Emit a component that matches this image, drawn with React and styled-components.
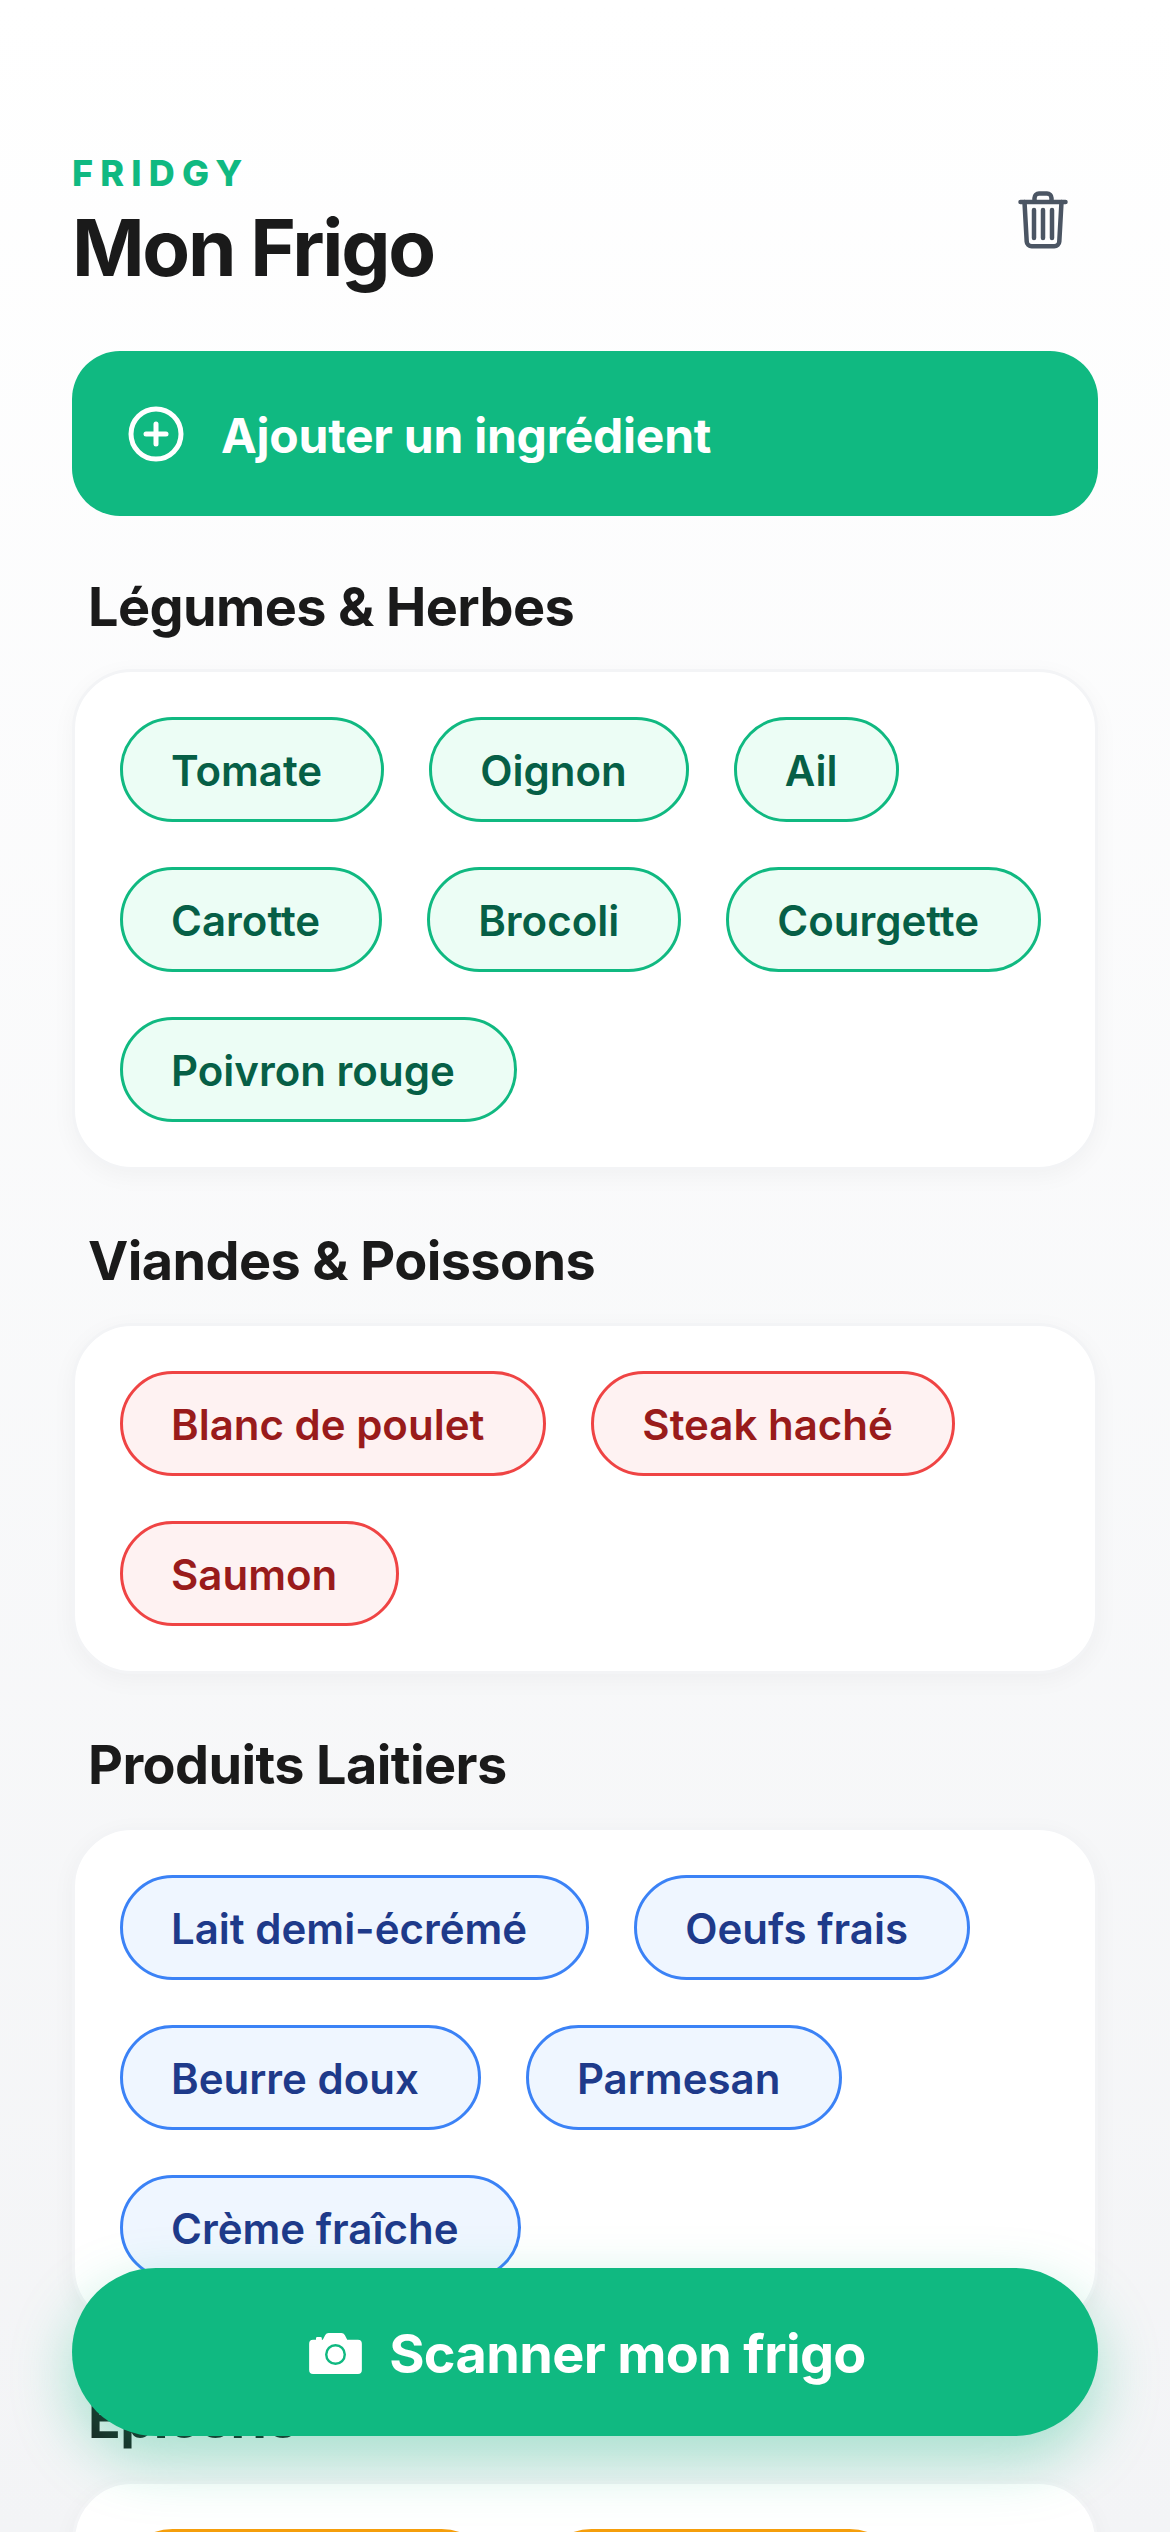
import React from "react";
import styled, { createGlobalStyle } from "styled-components";
import { CirclePlus } from "lucide-react";

const GlobalStyle = createGlobalStyle`
  html, body {
    margin: 0;
    padding: 0;
    background: #fff;
  }
  * {
    box-sizing: border-box;
  }
`;

const tones = {
  green: { bg: "#ecfdf5", border: "#10b981", text: "#065f46" },
  red: { bg: "#fef2f2", border: "#ef4444", text: "#991b1b" },
  blue: { bg: "#eff6ff", border: "#3b82f6", text: "#1e3a8a" },
  orange: { bg: "#fffbeb", border: "#f59e0b", text: "#92400e" }
};

const Screen = styled.div`
  position: relative;
  width: 1170px;
  height: 2532px;
  overflow: hidden;
  padding: 151px 72px 0;
  background: linear-gradient(180deg, #ffffff 0%, #f3f4f6 100%);
  font-family: Inter, "Liberation Sans", sans-serif;
  color: #1a1a1a;
`;

const Header = styled.header`
  display: flex;
  justify-content: space-between;
  align-items: center;
  margin-bottom: 56px;
`;

const Brand = styled.div`
  font-size: 36px;
  line-height: 44px;
  font-weight: 800;
  letter-spacing: 7.2px;
  color: #10b981;
  margin-bottom: 6px;
`;

const Title = styled.h1`
  margin: 0;
  font-size: 78px;
  line-height: 94px;
  font-weight: 700;
  letter-spacing: -2.3px;
`;

const TrashButton = styled.button`
  display: flex;
  padding: 0;
  border: 0;
  background: none;
  margin-right: 30px;
  margin-bottom: 6px;
`;

const AddButton = styled.button`
  display: flex;
  align-items: center;
  gap: 35px;
  width: 100%;
  height: 165px;
  padding: 0 54px;
  border: 0;
  border-radius: 48px;
  background: #10b981;
  color: #fff;
  font-family: inherit;
  font-size: 48px;
  font-weight: 700;
  letter-spacing: -0.25px;
`;

const AddLabel = styled.span`
  padding-top: 3px;
`;

const Section = styled.section`
  margin-top: 56px;
`;

const SectionTitle = styled.h2`
  margin: 0 0 28px;
  padding-left: 16px;
  font-size: 54px;
  line-height: 69px;
  font-weight: 700;
  letter-spacing: -0.6px;
`;

const Card = styled.div`
  display: flex;
  flex-wrap: wrap;
  gap: 45px;
  padding: 45px;
  border: 3px solid #f3f4f6;
  border-radius: 60px;
  background: #fff;
  box-shadow: 0 6px 24px rgba(0, 0, 0, 0.04);
`;

const Chip = styled.span`
  padding: 25px 59px 23px 48px;
  border: 3px solid ${(p) => tones[p.$tone].border};
  border-radius: 999px;
  background: ${(p) => tones[p.$tone].bg};
  color: ${(p) => tones[p.$tone].text};
  font-size: 42px;
  line-height: 51px;
  font-weight: 600;
`;

const ScanButton = styled.button`
  position: absolute;
  left: 72px;
  right: 72px;
  bottom: 96px;
  display: flex;
  align-items: center;
  justify-content: center;
  gap: 27px;
  height: 168px;
  padding: 2px 0 0 5px;
  border: 0;
  border-radius: 84px;
  background: #10b981;
  color: #fff;
  font-family: inherit;
  font-size: 54px;
  font-weight: 700;
  letter-spacing: -0.65px;
  box-shadow: 0 24px 60px rgba(16, 185, 129, 0.35);
`;

const TrashIcon = () => (
  <svg width="50" height="58" viewBox="0 0 50 58" fill="none" stroke="#4b5563" strokeWidth="4.5" strokeLinecap="round" strokeLinejoin="round">
    <path d="M2.5 11h45" />
    <path d="M16.5 10V7a4.5 4.5 0 0 1 4.5-4.5h8A4.5 4.5 0 0 1 33.5 7v3" />
    <path d="M6.5 11l2.2 39.5a5 5 0 0 0 5 4.7h22.6a5 5 0 0 0 5-4.7L43.500 11" />
    <path d="M16 19v28M25 19v28M34 19v28" />
  </svg>
);

const CameraIcon = () => (
  <svg width="53" height="41" viewBox="0 0 54 42">
    <path
      fill="#fff"
      d="M4 7h3V5.500A1.500 1.500 0 0 1 8.500 4h3A1.500 1.500 0 0 1 13 5.500V7h1l2.500-5A4 4 0 0 1 20 0h13a4 4 0 0 1 3.500 2L39 7h11a4 4 0 0 1 4 4v27a4 4 0 0 1-4 4H4a4 4 0 0 1-4-4V11a4 4 0 0 1 4-4z"
    />
    <circle cx="27" cy="22" r="9.500" fill="none" stroke="#10b981" strokeWidth="2.500" />
  </svg>
);

const sections = [
  {
    title: "Légumes & Herbes",
    tone: "green",
    items: ["Tomate", "Oignon", "Ail", "Carotte", "Brocoli", "Courgette", "Poivron rouge"]
  },
  {
    title: "Viandes & Poissons",
    tone: "red",
    items: ["Blanc de poulet", "Steak haché", "Saumon"]
  },
  {
    title: "Produits Laitiers",
    tone: "blue",
    items: ["Lait demi-écrémé", "Oeufs frais", "Beurre doux", "Parmesan", "Crème fraîche"]
  },
  {
    title: "Épicerie",
    tone: "orange",
    items: ["Farine de blé", "Huile d'olive"]
  }
];

export default function App() {
  return (
    <Screen>
      <GlobalStyle />
      <Header>
        <div>
          <Brand>FRIDGY</Brand>
          <Title>Mon Frigo</Title>
        </div>
        <TrashButton>
          <TrashIcon />
        </TrashButton>
      </Header>
      <AddButton>
        <CirclePlus size={60} strokeWidth={2} />
        <AddLabel>Ajouter un ingrédient</AddLabel>
      </AddButton>
      {sections.map((section) => (
        <Section key={section.title}>
          <SectionTitle>{section.title}</SectionTitle>
          <Card>
            {section.items.map((item) => (
              <Chip key={item} $tone={section.tone}>
                {item}
              </Chip>
            ))}
          </Card>
        </Section>
      ))}
      <ScanButton>
        <CameraIcon />
        Scanner mon frigo
      </ScanButton>
    </Screen>
  );
}
